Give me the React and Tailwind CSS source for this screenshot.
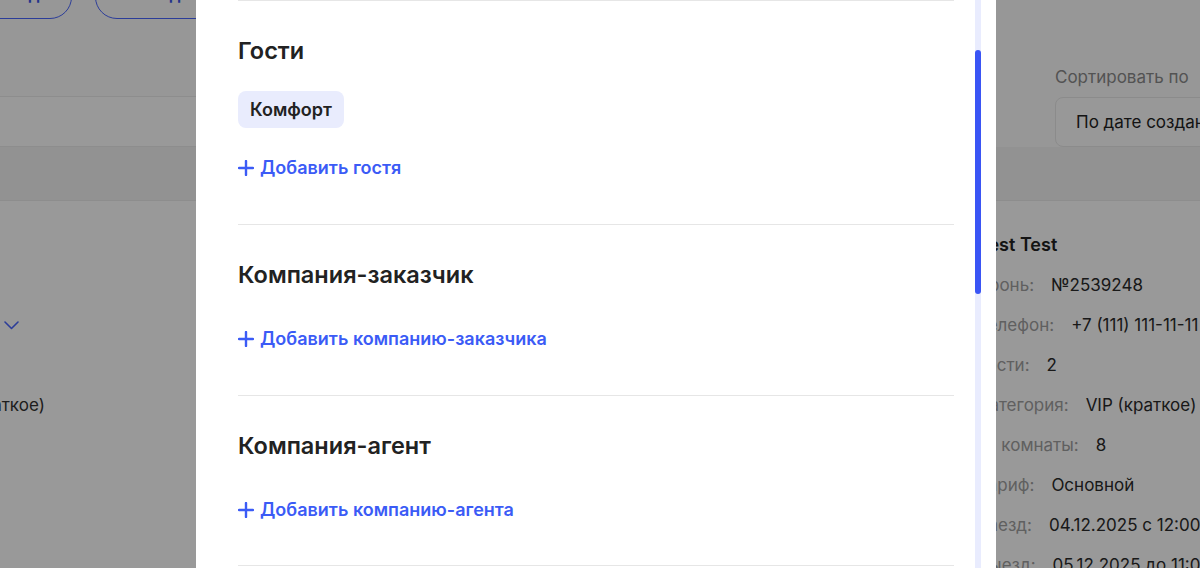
const details = [
  ['Бронь:', '№2539248'],
  ['Телефон:', '+7 (111) 111-11-11'],
  ['Гости:', '2'],
  ['Категория:', 'VIP (краткое)'],
  ['№ комнаты:', '8'],
  ['Тариф:', 'Основной'],
  ['Заезд:', '04.12.2025 с 12:00'],
  ['Выезд:', '05.12.2025 до 11:00'],
];

function PlusIcon() {
  return (
    <svg width="16" height="16" viewBox="0 0 16 16" fill="none">
      <path d="M8 1v14M1 8h14" stroke="currentColor" strokeWidth="2.4" strokeLinecap="round" />
    </svg>
  );
}

function Section({ title, children, link, linkGap = 'mt-[38px]' }) {
  return (
    <div className="border-t border-[#e6e6e6] pt-[36px] pb-[44px]">
      <h2 className="text-[23.5px] leading-[28px] font-semibold text-[#222]">{title}</h2>
      {children}
      <button className={`${linkGap} flex items-center gap-[6px] text-[18px] leading-[24px] font-semibold text-[#3b5bf6]`}>
        <PlusIcon />
        {link}
      </button>
    </div>
  );
}

export default function App() {
  return (
    <div className="relative w-[1200px] h-[568px] overflow-hidden bg-[#fcfcfc] font-['Inter','Noto_Sans',sans-serif] text-[17px] leading-[24px]">
      {/* page behind the modal */}
      <div className="-mt-[25px]">
        <div className="flex gap-[23px] -ml-[30px] h-[44px]">
          <div className="w-[102px] h-[44px] rounded-[22px] border-[1.5px] border-[#4a66ff] flex items-center justify-center pb-[7px] text-[#3a55e8] font-semibold">Заезды</div>
          <div className="w-[130px] h-[44px] rounded-[22px] border-[1.5px] border-[#4a66ff] flex items-center justify-center pb-[7px] text-[#3a55e8] font-semibold">Выезды</div>
        </div>

        <div className="flex items-end justify-between">
          <div className="-ml-[20px] w-[700px] h-[51px] border-y border-[#ececec] bg-white" />
          <div className="w-[145px] pt-[46px] flex flex-col gap-2">
            <span className="text-[#8a8a8a] whitespace-nowrap">Сортировать по</span>
            <div className="w-[240px] h-[50px] rounded-lg border border-[#e8e8e8] bg-[#fdfdfd] pl-5 flex items-center text-[#222] whitespace-nowrap">
              По дате создания
            </div>
          </div>
        </div>

        <div className="h-[53px] bg-[#f4f4f4]" />

        <div className="flex justify-between bg-white border-t border-[#ececec] h-[400px]">
          <div className="w-[196px] pt-[32px] flex flex-col gap-4">
            <div className="h-6" />
            <div className="h-6" />
            <div className="h-6 flex items-center pl-[4px]">
              <svg width="15" height="9" viewBox="0 0 15 9" fill="none">
                <path d="M1 1l6.5 6.5L14 1" stroke="#4a66ff" strokeWidth="1.6" strokeLinecap="round" strokeLinejoin="round" />
              </svg>
            </div>
            <div className="h-6" />
            <div className="h-6 w-[45px] flex justify-end overflow-hidden whitespace-nowrap text-[#333]">VIP (краткое)</div>
          </div>

          <div className="w-[222px] pt-[32px] flex flex-col gap-4 whitespace-nowrap">
            <div className="h-6 text-[18px] font-semibold text-[#222]">Test Test</div>
            {details.map(([label, value]) => (
              <div key={label} className="h-6 flex gap-[17px]">
                <span className="text-[#a0a0a0]">{label}</span>
                <span className="text-[#2a2a2a]">{value}</span>
              </div>
            ))}
          </div>
        </div>
      </div>

      {/* overlay */}
      <div className="absolute inset-0 bg-black/40" />

      {/* modal */}
      <div className="absolute top-0 left-[196px] w-[800px] h-[568px] bg-white flex">
        <div className="flex-1 pl-[42px] pr-[21px]">
          <Section title="Гости" link="Добавить гостя" linkGap="mt-[28px]">
            <div className="mt-[26px] inline-flex h-[37px] items-center rounded-lg bg-[#e9ecfd] px-3 text-[18px] font-semibold text-[#222]">
              Комфорт
            </div>
          </Section>
          <Section title="Компания-заказчик" link="Добавить компанию-заказчика" />
          <Section title="Компания-агент" link="Добавить компанию-агента" />
          <div className="-mt-[1px] border-t border-[#e6e6e6]" />
        </div>
        <div className="w-[6px] mr-[15px] bg-[#e9ecfe] flex flex-col">
          <div className="mt-[50px] h-[244px] rounded-full bg-[#3a55f5]" />
        </div>
      </div>
    </div>
  );
}
